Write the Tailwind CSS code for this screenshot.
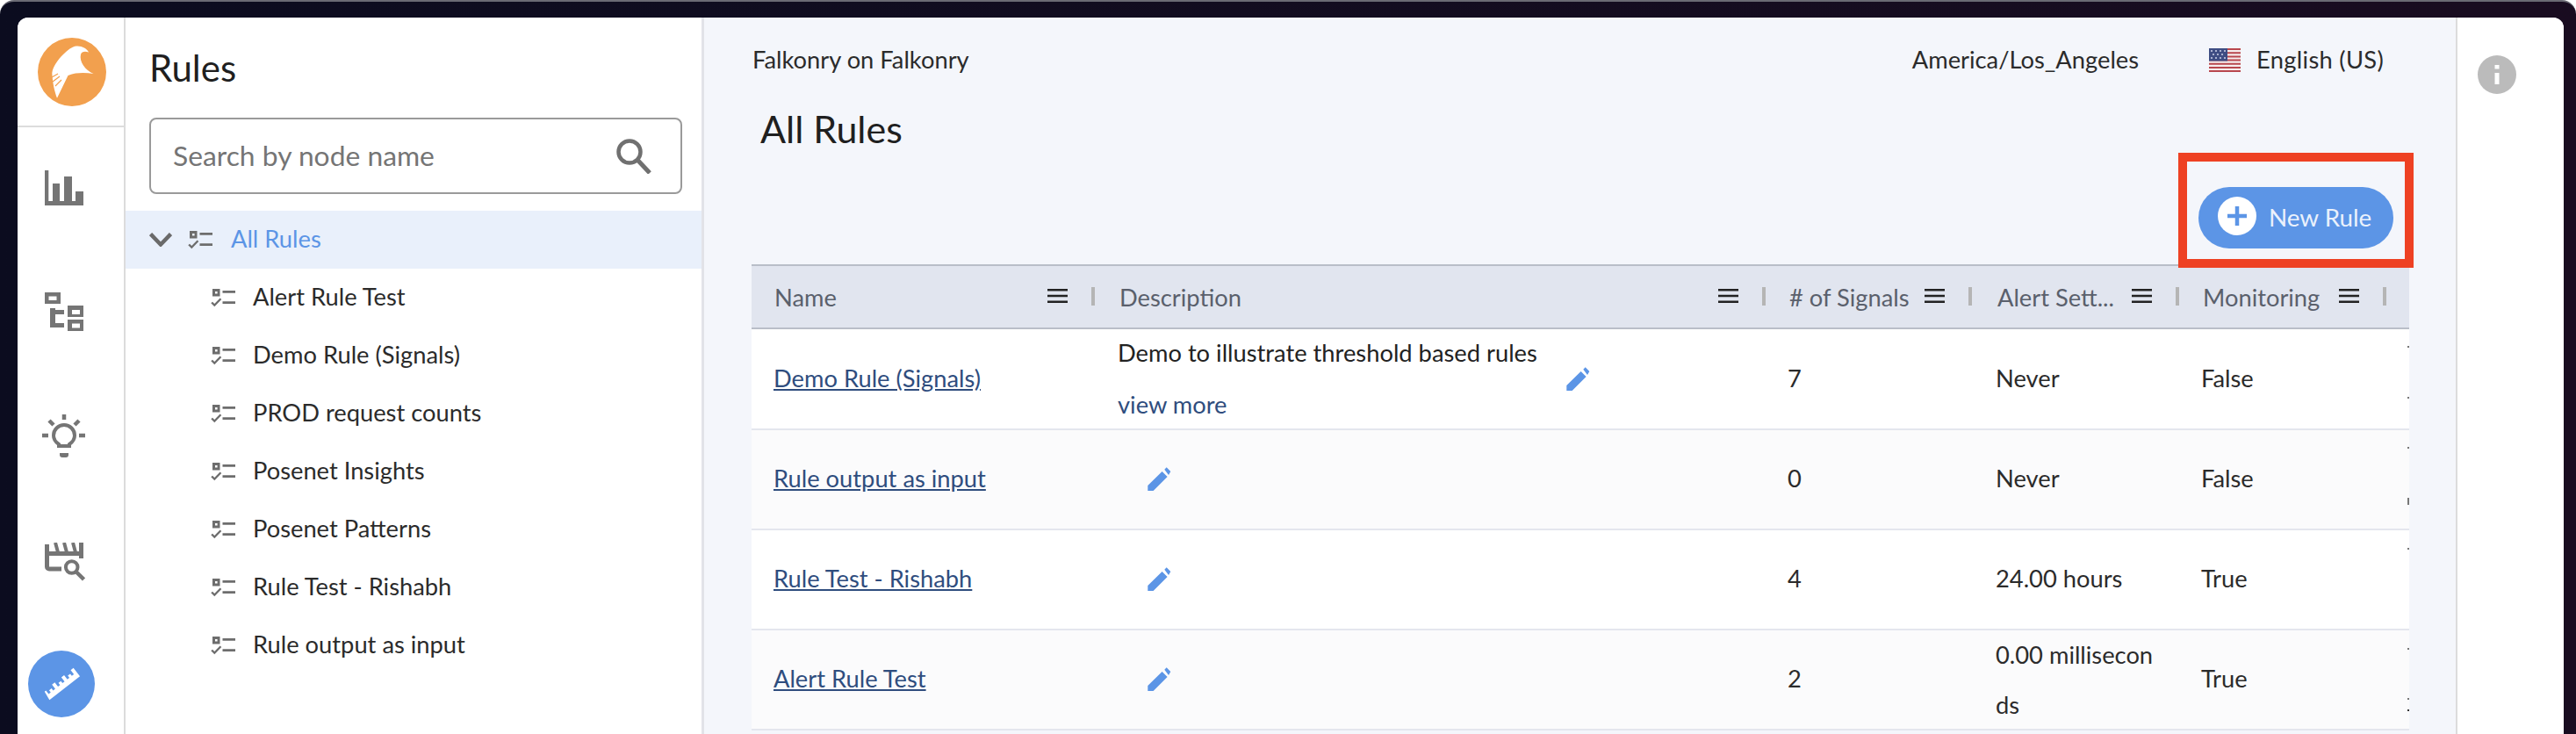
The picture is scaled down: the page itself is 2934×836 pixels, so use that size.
<!DOCTYPE html>
<html>
<head>
<meta charset="utf-8">
<script src="https://cdn.jsdelivr.net/npm/@tailwindcss/browser@4"></script>
</head>
<body class="m-0 overflow-hidden">
<div class="w-[2934px] h-[836px] overflow-hidden rounded-t-[16px] border-t-2 border-[#6a6a74] bg-gradient-to-r from-[#0b0c1f] to-[#190c20] pt-[18px] pl-[20px] pr-[14px] [font-family:Lato,sans-serif]">
  <div class="flex h-[816px] overflow-hidden rounded-t-[12px] bg-white">

    <!-- icon rail -->
    <nav class="w-[123px] shrink-0 border-r-2 border-[#dcdcdc] bg-white">
      <div class="h-[125px] border-b-2 border-[#dcdcdc] pl-[23px] pt-[23px]">
        <svg width="78" height="78" viewBox="43 43 78 78">
          <circle cx="82" cy="82" r="39" fill="#f2a04e"/>
          <path fill="#fff" d="M87 52.5C93 52 99 55 101 59.5C97 58 93 58.5 92 62C90 70 97 80 106.5 84C98 83 88 82 77.5 86L65 111.7C62 104 60 95 59.3 83.3C60 76 66 68 72 62C77 57 82 53 87 52.5Z"/>
          <path stroke="#f2a04e" stroke-width="1.2" d="M59 88L66 84M60 93L68 87M63 98L70 91"/>
        </svg>
      </div>
      <svg class="ml-[31px] mt-[49px] block" width="44" height="40" viewBox="51 194 44 40" fill="#757575">
        <path d="M51 194h4.300v35H60v-20h8v20h5v-28h9v28h4v-11h9v16H51z"/>
      </svg>
      <svg class="ml-[31px] mt-[99px] block" width="44" height="44" viewBox="51 333 44 44" fill="#757575">
        <path fill-rule="evenodd" d="M51 333h18v13H51zM55.500 337.500v4.500h9v-4.500zM77 348h18v13H77zM82 353v5h9v-5zM77 364h18v13H77zM82 368.500v5h9v-5z"/>
        <path d="M57 351h6v2h10v5H63v10h10v5H57z"/>
      </svg>
      <svg class="ml-[28px] mt-[94px] block" width="50" height="50" viewBox="48 471 50 50">
        <g fill="none" stroke="#757575" stroke-width="4.500">
          <path d="M73 472v6M48 496h7M90 496h7M56 479l5 5M90 479l-5 5"/>
          <path stroke-width="4" d="M67 508v-2c-3-2-6-5-6-10a12 12 0 0 1 24 0c0 5-3 8-6 10v2z"/>
        </g>
        <path fill="#757575" d="M68 516h10v2a3 3 0 0 1-3 3h-4a3 3 0 0 1-3-3z"/>
      </svg>
      <svg class="ml-[31px] mt-[97px] block" width="46" height="44" viewBox="51 618 46 44" fill="none" stroke="#757575">
        <path stroke-width="5" d="M70 648H56a2.500 2.500 0 0 1-2.500-2.500V620"/>
        <path stroke-width="5" d="M54 630.500h38.500V618M92.500 630v6"/>
        <path stroke-width="4" d="M63 618l3 11M73 618l3 11M83 618l3 11"/>
        <circle cx="81.700" cy="646" r="6.800" stroke-width="4"/>
        <path stroke-width="4.500" d="M86.500 651l9 9"/>
      </svg>
      <div class="ml-[12px] mt-[79px] flex h-[76px] w-[76px] items-center justify-center rounded-full bg-[#5c95e6]">
        <svg width="46" height="40" viewBox="-23 -20 46 40"><g transform="rotate(-38)" fill="#fff"><path d="M-22 6h44V-6h-4v6h-3v-3h-3.500v3h-3v-6h-4v6h-3v-3h-3.500v3h-3v-6h-4v6h-3v-3h-3.500v3h-3v-5h-2z"/></g></svg>
      </div>
    </nav>

    <!-- tree -->
    <aside class="w-[659px] shrink-0 border-r-[3px] border-[#e2e3e8] bg-white pt-[37px]">
      <h2 class="ml-[27px] h-[40px] text-[42px] leading-[40px] text-[#1f1f1f]">Rules</h2>
      <div class="ml-[27px] mt-[37px] flex h-[87px] w-[607px] items-center justify-between rounded-[8px] border-2 border-[#9a9a9a] pl-[25px] pr-[33px]">
        <span class="text-[31.8px] text-[#757575]">Search by node name</span>
        <svg width="40" height="40" viewBox="0 0 40 40" fill="none" stroke="#707070"><circle cx="15" cy="15" r="12.500" stroke-width="4.500"/><path stroke-width="5" d="M24 24l14 15"/></svg>
      </div>
      <ul class="mt-[19px]">
        <li class="flex h-[66px] items-center bg-[#e9f0fb] pl-[27px]">
          <svg width="26" height="16" viewBox="0 0 26 16" fill="none" stroke="#6a6a6a" stroke-width="4.500"><path d="M1.500 1.500L13 13.500L24.500 1.500"/></svg>
          <svg class="ml-[18px]" width="28" height="22" viewBox="0 0 28 22" fill="#6d6d6d"><path fill-rule="evenodd" d="M2 1h8.500v8.500H2zM5 4v2.600h2.600V4z"/><path d="M13.500 3h14.500v2.700H13.500zM13.500 15.300h14.500V18H13.500zM.3 17.300l1.700-1.500 2.300 2.300 6.300-6.600 1.700 1.500-8 8.300z"/></svg>
          <span class="-mt-[2px] ml-[21px] text-[27.3px] text-[#5c95e6]">All Rules</span>
        </li>
        <li class="flex h-[66px] items-center pl-[97px]"><svg width="28" height="22" viewBox="0 0 28 22" fill="#6d6d6d"><path fill-rule="evenodd" d="M2 1h8.500v8.500H2zM5 4v2.600h2.600V4z"/><path d="M13.500 3h14.500v2.700H13.500zM13.500 15.300h14.500V18H13.500zM.3 17.300l1.700-1.500 2.300 2.300 6.300-6.600 1.700 1.500-8 8.300z"/></svg><span class="-mt-[2px] ml-[20px] text-[27.3px] text-[#2b2b2b]">Alert Rule Test</span></li>
        <li class="flex h-[66px] items-center pl-[97px]"><svg width="28" height="22" viewBox="0 0 28 22" fill="#6d6d6d"><path fill-rule="evenodd" d="M2 1h8.500v8.500H2zM5 4v2.600h2.600V4z"/><path d="M13.500 3h14.500v2.700H13.500zM13.500 15.300h14.500V18H13.500zM.3 17.300l1.700-1.500 2.300 2.300 6.300-6.600 1.700 1.500-8 8.300z"/></svg><span class="-mt-[2px] ml-[20px] text-[27.3px] text-[#2b2b2b]">Demo Rule (Signals)</span></li>
        <li class="flex h-[66px] items-center pl-[97px]"><svg width="28" height="22" viewBox="0 0 28 22" fill="#6d6d6d"><path fill-rule="evenodd" d="M2 1h8.500v8.500H2zM5 4v2.600h2.600V4z"/><path d="M13.500 3h14.500v2.700H13.500zM13.500 15.300h14.500V18H13.500zM.3 17.300l1.700-1.500 2.300 2.300 6.300-6.600 1.700 1.500-8 8.300z"/></svg><span class="-mt-[2px] ml-[20px] text-[27.3px] text-[#2b2b2b]">PROD request counts</span></li>
        <li class="flex h-[66px] items-center pl-[97px]"><svg width="28" height="22" viewBox="0 0 28 22" fill="#6d6d6d"><path fill-rule="evenodd" d="M2 1h8.500v8.500H2zM5 4v2.600h2.600V4z"/><path d="M13.500 3h14.500v2.700H13.500zM13.500 15.300h14.500V18H13.500zM.3 17.300l1.700-1.500 2.300 2.300 6.300-6.600 1.700 1.500-8 8.300z"/></svg><span class="-mt-[2px] ml-[20px] text-[27.3px] text-[#2b2b2b]">Posenet Insights</span></li>
        <li class="flex h-[66px] items-center pl-[97px]"><svg width="28" height="22" viewBox="0 0 28 22" fill="#6d6d6d"><path fill-rule="evenodd" d="M2 1h8.500v8.500H2zM5 4v2.600h2.600V4z"/><path d="M13.500 3h14.500v2.700H13.500zM13.500 15.300h14.500V18H13.500zM.3 17.300l1.700-1.500 2.300 2.300 6.300-6.600 1.700 1.500-8 8.300z"/></svg><span class="-mt-[2px] ml-[20px] text-[27.3px] text-[#2b2b2b]">Posenet Patterns</span></li>
        <li class="flex h-[66px] items-center pl-[97px]"><svg width="28" height="22" viewBox="0 0 28 22" fill="#6d6d6d"><path fill-rule="evenodd" d="M2 1h8.500v8.500H2zM5 4v2.600h2.600V4z"/><path d="M13.500 3h14.500v2.700H13.500zM13.500 15.300h14.500V18H13.500zM.3 17.300l1.700-1.500 2.300 2.300 6.300-6.600 1.700 1.500-8 8.300z"/></svg><span class="-mt-[2px] ml-[20px] text-[27.3px] text-[#2b2b2b]">Rule Test - Rishabh</span></li>
        <li class="flex h-[66px] items-center pl-[97px]"><svg width="28" height="22" viewBox="0 0 28 22" fill="#6d6d6d"><path fill-rule="evenodd" d="M2 1h8.500v8.500H2zM5 4v2.600h2.600V4z"/><path d="M13.500 3h14.500v2.700H13.500zM13.500 15.300h14.500V18H13.500zM.3 17.300l1.700-1.500 2.300 2.300 6.300-6.600 1.700 1.500-8 8.300z"/></svg><span class="-mt-[2px] ml-[20px] text-[27.3px] text-[#2b2b2b]">Rule output as input</span></li>
      </ul>
    </aside>

    <!-- main -->
    <main class="min-w-0 flex-1 bg-[#f4f6fb] pl-[54px] pr-[53px]">
      <header class="flex h-[96px] items-center text-[27.3px] text-[#2b2b2b]">
        <span class="ml-[1px]">Falkonry on Falkonry</span>
        <span class="ml-auto">America/Los_Angeles</span>
        <svg class="ml-[80px]" width="36" height="27" viewBox="0 0 36 27">
          <rect width="36" height="27" fill="#f6eeee"/>
          <path fill="#b8474e" d="M0 0h36v2H0zM0 4.200h36v2H0zM0 8.400h36v2H0zM0 12.600h36v2H0zM0 16.800h36v2H0zM0 21h36v2H0zM0 25h36v2H0z"/>
          <rect width="21" height="14.500" fill="#3e4d83"/>
          <g fill="#aab2d0"><rect x="2" y="2" width="2" height="2"/><rect x="7" y="2" width="2" height="2"/><rect x="12" y="2" width="2" height="2"/><rect x="17" y="2" width="2" height="2"/><rect x="4" y="6" width="2" height="2"/><rect x="9" y="6" width="2" height="2"/><rect x="14" y="6" width="2" height="2"/><rect x="2" y="10" width="2" height="2"/><rect x="7" y="10" width="2" height="2"/><rect x="12" y="10" width="2" height="2"/><rect x="17" y="10" width="2" height="2"/></g>
        </svg>
        <span class="ml-[18px] mr-[29px] tracking-[0.3px]">English (US)</span>
      </header>
      <h1 class="ml-[10px] mt-[11px] mb-[1px] h-[40px] text-[43px] leading-[40px] text-[#1f1f1f]">All Rules</h1>
      <div class="mt-[46px] flex justify-end pr-[18px]">
        <div class="relative">
          <button class="flex h-[70px] w-[222px] items-center rounded-full bg-[#5c95e6] pl-[22px] text-[27.8px] text-[#eaf1fc]">
            <svg width="44" height="44" viewBox="0 0 44 44" class="-mt-[4px]"><circle cx="22" cy="22" r="22" fill="#fff"/><path stroke="#5c95e6" stroke-width="4.500" d="M11 22h22M22 11v22"/></svg>
            <span class="ml-[14px]">New Rule</span>
          </button>
          <div class="absolute -left-[23px] -right-[23px] -top-[39px] -bottom-[22px] z-10 border-[10px] border-[#ee4123]"></div>
        </div>
      </div>
      <section class="mt-[18px] w-[1888px] overflow-hidden whitespace-nowrap text-[27.3px] text-[#2b2b2b]">
        <div class="grid h-[74px] w-[1888px] grid-cols-[391px_764px_235px_236px_236px_26px] border-y-2 border-[#b9bec8] bg-[#e1e5ef] text-[#5a606c]">
          <div class="flex items-center pl-[26px] pt-[2px]"><span>Name</span><svg class="ml-auto -mt-[5px]" width="23" height="16" viewBox="0 0 23 16" fill="#222"><path d="M0 0h23v2.400H0zM0 6.800h23v2.400H0zM0 13.600h23V16H0z"/></svg><i class="ml-[27px] -mt-[3px] h-[21px] w-[4px] bg-[#b5b5b5]"></i></div>
          <div class="flex items-center pl-[28px] pt-[2px]"><span>Description</span><svg class="ml-auto -mt-[5px]" width="23" height="16" viewBox="0 0 23 16" fill="#222"><path d="M0 0h23v2.400H0zM0 6.800h23v2.400H0zM0 13.600h23V16H0z"/></svg><i class="ml-[27px] -mt-[3px] h-[21px] w-[4px] bg-[#b5b5b5]"></i></div>
          <div class="flex items-center pl-[27px] pt-[2px]"><span># of Signals</span><svg class="ml-auto -mt-[5px]" width="23" height="16" viewBox="0 0 23 16" fill="#222"><path d="M0 0h23v2.400H0zM0 6.800h23v2.400H0zM0 13.600h23V16H0z"/></svg><i class="ml-[27px] -mt-[3px] h-[21px] w-[4px] bg-[#b5b5b5]"></i></div>
          <div class="flex items-center pl-[29px] pt-[2px]"><span>Alert Sett...</span><svg class="ml-auto -mt-[5px]" width="23" height="16" viewBox="0 0 23 16" fill="#222"><path d="M0 0h23v2.400H0zM0 6.800h23v2.400H0zM0 13.600h23V16H0z"/></svg><i class="ml-[27px] -mt-[3px] h-[21px] w-[4px] bg-[#b5b5b5]"></i></div>
          <div class="flex items-center pl-[27px] pt-[2px]"><span>Monitoring</span><svg class="ml-auto -mt-[5px]" width="23" height="16" viewBox="0 0 23 16" fill="#222"><path d="M0 0h23v2.400H0zM0 6.800h23v2.400H0zM0 13.600h23V16H0z"/></svg><i class="ml-[27px] -mt-[3px] h-[21px] w-[4px] bg-[#b5b5b5]"></i></div>
        </div>

        <div class="grid h-[115px] w-[1888px] grid-cols-[391px_764px_235px_236px_236px_26px] items-center border-b-2 border-[#e4e6ee] bg-white pb-[1px]">
          <a class="pl-[25px] text-[#2f4d7e] underline">Demo Rule (Signals)</a>
          <div class="flex h-[110px] items-center pl-[26px]"><div class="w-[511px] leading-[59px]"><div class="text-[#222]">Demo to illustrate threshold based rules</div><div class="text-[#2f4d7e]">view more</div></div><svg width="27" height="27" viewBox="0 0 27 27" fill="#5c95e6"><path d="M.3 27v-6L16.600 5l6 6-16 16zM19.300 2.700l2.400-2.400 4.600 4.700-2.300 4z"/></svg></div>
          <div class="pl-[25px]">7</div><div class="pl-[27px]">Never</div><div class="pl-[25px]">False</div>
          <div class="relative h-[110px]"><i class="absolute right-0 top-[18px] h-[2px] w-[2px] bg-[#777]"></i><i class="absolute right-0 top-[76px] h-[2px] w-[2px] bg-[#777]"></i></div>
        </div>
        <div class="grid h-[114px] w-[1888px] grid-cols-[391px_764px_235px_236px_236px_26px] items-center border-b-2 border-[#e4e6ee] bg-[#fbfbfc] pb-[1px]">
          <a class="pl-[25px] text-[#2f4d7e] underline">Rule output as input</a>
          <div class="pl-[60px]"><svg class="block" width="27" height="27" viewBox="0 0 27 27" fill="#5c95e6"><path d="M.3 27v-6L16.600 5l6 6-16 16zM19.300 2.700l2.400-2.400 4.600 4.700-2.300 4z"/></svg></div>
          <div class="pl-[25px]">0</div><div class="pl-[27px]">Never</div><div class="pl-[25px]">False</div>
          <div class="relative h-[110px]"><i class="absolute right-0 top-[18px] h-[2px] w-[2px] bg-[#777]"></i><i class="absolute right-0 top-[76px] h-[8px] w-[2px] bg-[#777]"></i></div>
        </div>
        <div class="grid h-[114px] w-[1888px] grid-cols-[391px_764px_235px_236px_236px_26px] items-center border-b-2 border-[#e4e6ee] bg-white pb-[1px]">
          <a class="pl-[25px] text-[#2f4d7e] underline">Rule Test - Rishabh</a>
          <div class="pl-[60px]"><svg class="block" width="27" height="27" viewBox="0 0 27 27" fill="#5c95e6"><path d="M.3 27v-6L16.600 5l6 6-16 16zM19.300 2.700l2.400-2.400 4.600 4.700-2.300 4z"/></svg></div>
          <div class="pl-[25px]">4</div><div class="pl-[27px]">24.00 hours</div><div class="pl-[25px]">True</div>
          <div class="relative h-[110px]"><i class="absolute right-0 top-[19px] h-[2px] w-[2px] bg-[#777]"></i></div>
        </div>
        <div class="grid h-[114px] w-[1888px] grid-cols-[391px_764px_235px_236px_236px_26px] items-center border-b-2 border-[#e4e6ee] bg-[#fbfbfc] pb-[1px]">
          <a class="pl-[25px] text-[#2f4d7e] underline">Alert Rule Test</a>
          <div class="pl-[60px]"><svg class="block" width="27" height="27" viewBox="0 0 27 27" fill="#5c95e6"><path d="M.3 27v-6L16.600 5l6 6-16 16zM19.300 2.700l2.400-2.400 4.600 4.700-2.300 4z"/></svg></div>
          <div class="pl-[25px]">2</div><div class="flex h-[110px] items-center pl-[27px]"><div class="w-[190px] whitespace-normal break-all leading-[57px]">0.00 milliseconds</div></div><div class="pl-[25px]">True</div>
          <div class="relative h-[110px]"><i class="absolute right-0 top-[19px] h-[2px] w-[2px] bg-[#777]"></i><i class="absolute right-0 top-[76px] h-[2px] w-[2px] bg-[#777]"></i><i class="absolute right-0 top-[89px] h-[2px] w-[2px] bg-[#333]"></i></div>
        </div>
      </section>
    </main>

    <!-- right info rail -->
    <aside class="w-[123px] shrink-0 border-l-2 border-[#dcdcdc] bg-white pl-[23px] pt-[43px]">
      <svg width="44" height="44" viewBox="0 0 44 44"><circle cx="22" cy="22" r="22" fill="#bbb"/><path fill="#fff" d="M19.500 11h5v4.500h-5zM19.500 20h5v13h-5z"/></svg>
    </aside>
  </div>
</div>
</body>
</html>
